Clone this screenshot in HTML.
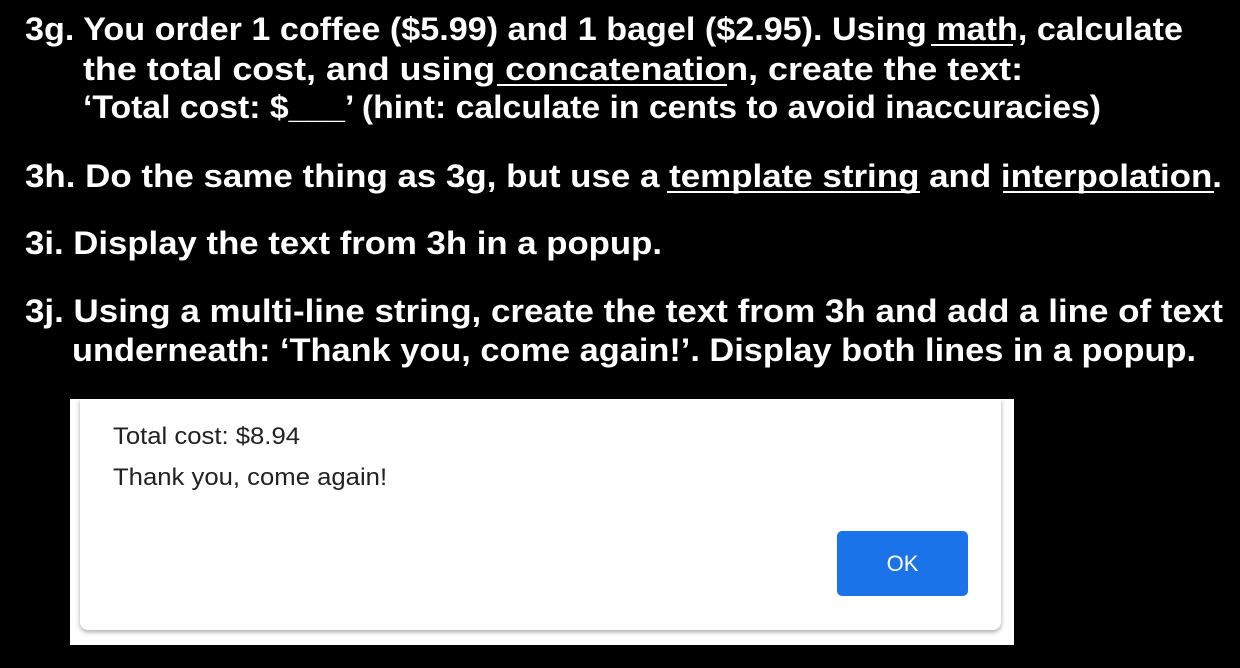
<!DOCTYPE html>
<html><head><meta charset="utf-8"><style>
html,body{margin:0;padding:0;background:#000;width:1240px;height:668px;overflow:hidden}
svg{position:absolute;left:0;top:0}
.panel{position:absolute;left:70px;top:399px;width:944px;height:246px;background:#fff}
.card{position:absolute;left:10px;top:0;width:921px;height:231px;background:#fff;border-radius:0 0 8px 8px;box-shadow:0 2px 5px rgba(0,0,0,.35)}
.t{position:absolute;left:33px;font-family:"Liberation Sans",sans-serif;font-size:24px;color:#222;white-space:nowrap;transform-origin:0 0}
.btn{position:absolute;left:757px;top:132px;width:131px;height:65px;background:#1a73e8;border-radius:5px;color:#fff;font-family:"Liberation Sans",sans-serif;font-size:22px;line-height:65px;text-align:center}
</style></head><body>
<svg width="1240" height="400" font-family="Liberation Sans, sans-serif" font-weight="bold" font-size="32" fill="#fff">
<text x="25" y="40" textLength="1158" lengthAdjust="spacingAndGlyphs">3g. You order 1 coffee ($5.99) and 1 bagel ($2.95). Using math, calculate</text>
<text x="83" y="80" textLength="940" lengthAdjust="spacingAndGlyphs">the total cost, and using concatenation, create the text:</text>
<text x="83" y="118" textLength="1018" lengthAdjust="spacingAndGlyphs">‘Total cost: $___’ (hint: calculate in cents to avoid inaccuracies)</text>
<text x="25" y="187" textLength="1197" lengthAdjust="spacingAndGlyphs">3h. Do the same thing as 3g, but use a template string and interpolation.</text>
<text x="25" y="254" textLength="637" lengthAdjust="spacingAndGlyphs">3i. Display the text from 3h in a popup.</text>
<text x="25" y="322" textLength="1198" lengthAdjust="spacingAndGlyphs">3j. Using a multi-line string, create the text from 3h and add a line of text</text>
<text x="72" y="361" textLength="1124" lengthAdjust="spacingAndGlyphs">underneath: ‘Thank you, come again!’. Display both lines in a popup.</text>
<rect x="931" y="44" width="82" height="2"/>
<rect x="497" y="84" width="230" height="2"/>
<rect x="667" y="191" width="253" height="2"/>
<rect x="1003" y="191" width="211" height="2"/>
</svg>
<div class="panel"><div class="card">
<div class="t" style="top:24px;transform:scaleX(1.07)">Total cost: $8.94</div>
<div class="t" style="top:65px;transform:scaleX(1.07)">Thank you, come again!</div>
<div class="btn">OK</div>
</div></div>
</body></html>
